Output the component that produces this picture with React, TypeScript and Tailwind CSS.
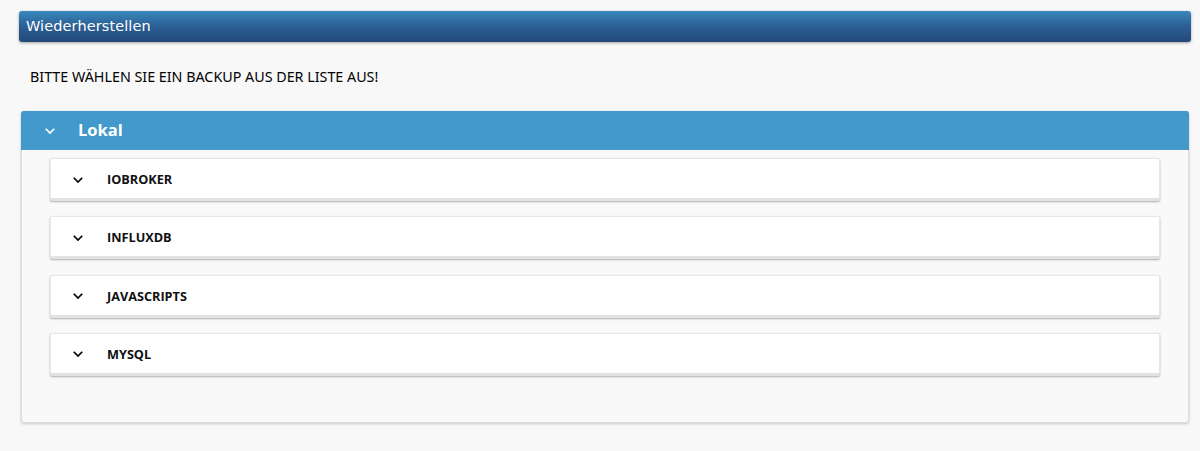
import React from "react";

const Chevron = ({ className }: { className?: string }) => (
  <svg viewBox="0 0 24 24" className={className} fill="none" stroke="currentColor" strokeWidth={3.4} strokeLinecap="butt" strokeLinejoin="miter">
    <path d="M3.5 7.5l8.5 8.5 8.5-8.5" />
  </svg>
);

const items = ["IOBROKER", "INFLUXDB", "JAVASCRIPTS", "MYSQL"];

export default function App() {
  return (
    <div className="min-h-[451px] w-[1200px] bg-[#f8f8f8] pt-[11px]">
      <div className="ml-[19px] mr-[9px] h-[31px] rounded-[3px] bg-gradient-to-b from-[#3a88bd] via-[#2b5f94] to-[#224879] shadow-[0_1px_3px_rgba(0,0,0,0.35)] flex items-center pl-[7px]">
        <span className="text-white text-[14.5px] tracking-[0.1px] font-['DejaVu_Sans',sans-serif]">Wiederherstellen</span>
      </div>
      <div className="pl-[30px] pt-[24px] h-[69px] text-[14.3px] text-black font-['Noto_Sans',sans-serif]">
        BITTE WÄHLEN SIE EIN BACKUP AUS DER LISTE AUS!
      </div>
      <div className="ml-[21px] w-[1168px] h-[312px] rounded-[3px] bg-[#f9f9f9] border border-[#dcdcdc] shadow-[0_1px_3px_rgba(0,0,0,0.2)] font-['Open_Sans',sans-serif]">
        <div className="h-[39px] -mx-px -mt-px rounded-t-[3px] bg-[#4399cb] flex items-center text-white">
          <Chevron className="ml-[23px] w-[12px] h-[12px]" />
          <span className="ml-[22px] text-[16.5px] font-bold">Lokal</span>
        </div>
        <div className="flex flex-col gap-[15.3px] px-[28px] pt-[8px]">
          {items.map((it) => (
            <div key={it} className="h-[43px] pt-[2px] bg-white border border-[#e6e6e6] border-b-[3px] border-b-[#e2e2e2] rounded-[2px] shadow-[0_1px_2px_rgba(0,0,0,0.3)] flex items-center">
              <Chevron className="ml-[21px] w-[12px] h-[12px] text-black" />
              <span className="ml-[23px] text-[12.7px] font-bold text-[#111]">{it}</span>
            </div>
          ))}
        </div>
      </div>
    </div>
  );
}
